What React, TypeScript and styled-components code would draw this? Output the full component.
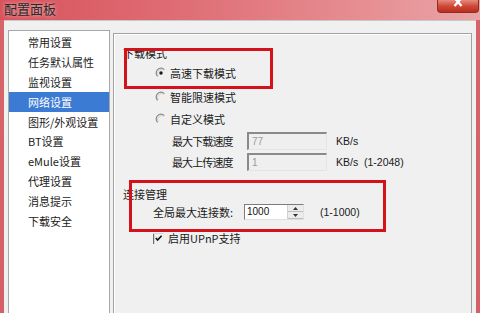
import React from 'react'
import styled, { createGlobalStyle } from 'styled-components'

const cjk = `"Noto Sans CJK SC", "Liberation Sans", sans-serif`

const GlobalStyle = createGlobalStyle`
  html, body {
    margin: 0;
    padding: 0;
    background: #fff;
  }
  * {
    box-sizing: border-box;
  }
`

const menuItems = [
  '常用设置',
  '任务默认属性',
  '监视设置',
  '网络设置',
  '图形/外观设置',
  'BT设置',
  'eMule设置',
  '代理设置',
  '消息提示',
  '下载安全',
]

function RadioMark({ checked }: { checked?: boolean }) {
  return (
    <svg width="12" height="12" viewBox="0 0 12 12">
      <path d="M2.6 9.4 A4.8 4.8 0 0 1 9.4 2.6" fill="none" stroke="#8a8a8a" strokeWidth="1.2" />
      <path d="M3.4 8.6 A3.7 3.7 0 0 1 8.6 3.4" fill="none" stroke="#c8c8c8" strokeWidth="0.8" />
      {checked && <circle cx="6" cy="6" r="1.7" fill="#1a1a1a" />}
    </svg>
  )
}

function CheckMark() {
  return (
    <svg width="11" height="11" viewBox="0 0 11 11">
      <path d="M0.6 0 V11" stroke="#6e6e6e" strokeWidth="1.2" />
      <path d="M0 0.6 H11" stroke="#d8d8d8" strokeWidth="1" />
      <path d="M2.8 5 L4.6 7 L8.6 2.8" fill="none" stroke="#111" strokeWidth="1.6" />
    </svg>
  )
}

function App() {
  return (
    <>
      <GlobalStyle />
      <Window>
        <TitleBar>
          <Title>配置面板</Title>
          <CloseButton>
            <svg width="12" height="10" viewBox="0 0 12 10">
              <path d="M2.5 -2 L9.5 6 M9.5 -2 L2.5 6" stroke="#fff" strokeWidth="2.2" />
            </svg>
          </CloseButton>
        </TitleBar>
        <Body>
          <Menu>
            {menuItems.map((item) => (
              <MenuItem key={item} $active={item === '网络设置'}>
                {item}
              </MenuItem>
            ))}
          </Menu>
          <Panel>
            <GroupLabel $top={11}>下载模式</GroupLabel>
            <Row $top={2}>
              <RadioBox>
                <RadioMark checked />
              </RadioBox>
              <span>高速下载模式</span>
            </Row>
            <Row $top={4}>
              <RadioBox>
                <RadioMark />
              </RadioBox>
              <span>智能限速模式</span>
            </Row>
            <Row $top={2}>
              <RadioBox>
                <RadioMark />
              </RadioBox>
              <span>自定义模式</span>
            </Row>
            <Row $top={2} $indent={58}>
              <SpeedLabel>最大下载速度</SpeedLabel>
              <SpeedInput>77</SpeedInput>
              <Unit>KB/s</Unit>
            </Row>
            <Row $top={1} $indent={58}>
              <SpeedLabel>最大上传速度</SpeedLabel>
              <SpeedInput>1</SpeedInput>
              <Unit>KB/s&nbsp;&nbsp;(1-2048)</Unit>
            </Row>
            <GroupLabel $top={14}>连接管理</GroupLabel>
            <Row $top={0} $indent={39}>
              <ConnLabel>全局最大连接数:</ConnLabel>
              <Spinner>
                <SpinnerValue>1000</SpinnerValue>
                <SpinnerButtons>
                  <SpinnerButton>
                    <svg width="5" height="3" viewBox="0 0 5 3">
                      <path d="M0 3 L2.5 0 L5 3 Z" fill="#333" />
                    </svg>
                  </SpinnerButton>
                  <SpinnerButton>
                    <svg width="5" height="3" viewBox="0 0 5 3">
                      <path d="M0 0 L2.5 3 L5 0 Z" fill="#333" />
                    </svg>
                  </SpinnerButton>
                </SpinnerButtons>
              </Spinner>
              <Range>(1-1000)</Range>
            </Row>
            <Row $top={6} $indent={39}>
              <CheckBox>
                <CheckMark />
              </CheckBox>
              <span>启用UPnP支持</span>
            </Row>
          </Panel>
        </Body>
        <Highlight style={{ left: 124, top: 48, width: 149, height: 41 }} />
        <Highlight style={{ left: 129, top: 180, width: 257, height: 52 }} />
      </Window>
    </>
  )
}

export default App

const Window = styled.div`
  position: relative;
  width: 480px;
  height: 313px;
  overflow: hidden;
  display: flex;
  flex-direction: column;
  background: linear-gradient(180deg, #d8646b 0%, #d46168 100%);
  font-family: ${cjk};
  font-size: 11px;
  color: #1b1b1b;
`

const TitleBar = styled.div`
  height: 20px;
  flex-shrink: 0;
  display: flex;
  align-items: flex-start;
  background: linear-gradient(90deg, #d8535c 0%, #df6f77 40%, #e68e92 75%, #e9a4a6 100%);
`

const Title = styled.div`
  padding-left: 4px;
  font-size: 13px;
  line-height: 17px;
  color: #2a2a2a;
  text-shadow: 0 0 4px rgba(255, 255, 255, 0.7);
`

const CloseButton = styled.div`
  margin-left: auto;
  margin-right: 1px;
  width: 42px;
  height: 13px;
  display: flex;
  align-items: flex-start;
  justify-content: center;
  background: linear-gradient(180deg, #e58b7e 0%, #cf4a38 50%, #b92d1d 100%);
  border: 1px solid #8d2e25;
  border-top: none;
  border-radius: 0 0 4px 4px;
`

const Body = styled.div`
  flex: 1;
  min-height: 0;
  margin: 0 4px;
  padding: 9px 4px 0 4px;
  display: flex;
  gap: 3px;
  background: #f0f0f0;
  border-top: 1px solid #c9c9c9;
`

const Menu = styled.div`
  width: 102px;
  flex-shrink: 0;
  padding-top: 2px;
  background: #fff;
  border: 1px solid #a8a8a8;
  border-bottom: none;
`

const MenuItem = styled.div<{ $active?: boolean }>`
  height: 19.8px;
  display: flex;
  align-items: center;
  padding-left: 19px;
  line-height: 1;
  background: ${(p) => (p.$active ? '#3b7bd4' : 'transparent')};
  color: ${(p) => (p.$active ? '#fff' : '#1b1b1b')};
`

const Panel = styled.div`
  flex: 1;
  margin-top: 3px;
  display: flex;
  flex-direction: column;
  border: 1px solid #a2a2a2;
  border-bottom: none;
  box-shadow: inset 1px 1px 0 #fff;
`

const GroupLabel = styled.div<{ $top: number }>`
  height: 16px;
  margin-top: ${(p) => p.$top}px;
  padding-left: 9px;
  display: flex;
  align-items: center;
  line-height: 1;
`

const Row = styled.div<{ $top: number; $indent?: number }>`
  height: 20px;
  margin-top: ${(p) => p.$top}px;
  padding-left: ${(p) => p.$indent ?? 41}px;
  display: flex;
  align-items: center;
  line-height: 1;
  white-space: nowrap;
`

const RadioBox = styled.span`
  width: 12px;
  height: 12px;
  margin-right: 3px;
  display: flex;
`

const SpeedLabel = styled.span`
  width: 75px;
  letter-spacing: -0.9px;
`

const SpeedInput = styled.div`
  width: 80px;
  height: 18px;
  padding-left: 3px;
  display: flex;
  align-items: center;
  font-family: "Liberation Sans", sans-serif;
  font-size: 10px;
  color: #9a9a9a;
  background: #efefef;
  border-top: 2px solid #8a8a8a;
  border-left: 2px solid #8a8a8a;
  border-right: 1px solid #e4e4e4;
  border-bottom: 1px solid #e4e4e4;
`

const Unit = styled.span`
  margin-left: 9px;
  font-family: "Liberation Sans", sans-serif;
  font-size: 10.5px;
`

const ConnLabel = styled.span`
  width: 91px;
`

const Spinner = styled.div`
  width: 60px;
  height: 16px;
  display: flex;
  background: #fff;
  border-top: 1px solid #7c7c7c;
  border-left: 1px solid #7c7c7c;
  border-right: 1px solid #e0e0e0;
  border-bottom: 1px solid #e0e0e0;
`

const SpinnerValue = styled.div`
  flex: 1;
  padding-left: 2px;
  display: flex;
  align-items: center;
  font-family: "Liberation Sans", sans-serif;
  font-size: 10px;
  color: #111;
`

const SpinnerButtons = styled.div`
  width: 16px;
  display: flex;
  flex-direction: column;
  border-left: 1px solid #d0d0d0;
`

const SpinnerButton = styled.div`
  flex: 1;
  display: flex;
  align-items: center;
  justify-content: center;
  background: #ececec;
  border-bottom: 1px solid #bdbdbd;
`

const Range = styled.span`
  margin-left: 16px;
  font-family: "Liberation Sans", sans-serif;
  font-size: 10.5px;
`

const CheckBox = styled.span`
  width: 11px;
  height: 11px;
  margin-right: 4px;
  display: flex;
`

const Highlight = styled.div`
  position: absolute;
  border: 3px solid #d3121c;
  pointer-events: none;
`
